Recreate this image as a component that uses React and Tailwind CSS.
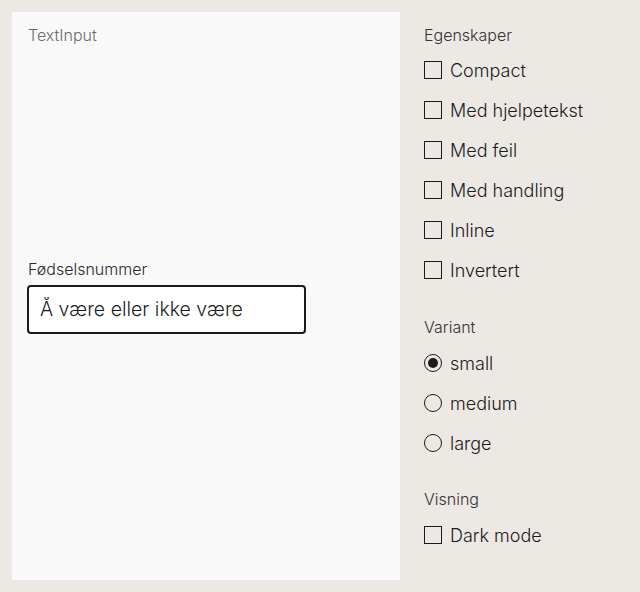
import React, { useState, useEffect, useRef } from "react";

const Checkbox = ({ label, checked, onChange }) => (
  <label className="flex h-10 cursor-pointer items-center gap-2">
    <input type="checkbox" className="sr-only" checked={checked} onChange={onChange} />
    <span className="flex h-[18px] w-[18px] shrink-0 items-center justify-center border-[1.5px] border-[#1b1b1b] bg-transparent">
      {checked && <span className="h-2 w-2 bg-[#1b1b1b]" />}
    </span>
    <span className="text-[18px] font-light text-[#1b1b1b]">{label}</span>
  </label>
);

const Radio = ({ label, checked, onChange }) => (
  <label className="flex h-10 cursor-pointer items-center gap-2">
    <input type="radio" className="sr-only" checked={checked} onChange={onChange} />
    <span className="flex h-[18px] w-[18px] shrink-0 items-center justify-center rounded-full border-[1.5px] border-[#1b1b1b]">
      {checked && <span className="h-[10px] w-[10px] rounded-full bg-[#1b1b1b]" />}
    </span>
    <span className="text-[18px] font-light text-[#1b1b1b]">{label}</span>
  </label>
);

const Heading = ({ children, className = "" }) => (
  <h3 className={`text-[16px] font-light leading-6 text-[#333] ${className}`}>{children}</h3>
);

export default function App() {
  const [props, setProps] = useState({});
  const [variant, setVariant] = useState("small");
  const [dark, setDark] = useState(false);
  const [value, setValue] = useState("Å være eller ikke være");
  const inputRef = useRef(null);

  useEffect(() => {
    const el = inputRef.current;
    if (el) {
      el.focus();
      el.setSelectionRange(el.value.length, el.value.length);
    }
  }, []);

  const toggle = (key) => setProps((p) => ({ ...p, [key]: !p[key] }));

  return (
    <div
      className="flex h-screen gap-6 bg-[#ece9e4] p-3"
      style={{ fontFamily: "Inter, 'Noto Sans', sans-serif" }}
    >
      {/* Preview */}
      <div className="flex w-[388px] flex-col bg-[#f9f9f9] px-4 pt-[11px] pb-[37px]">
        <p className="text-[16px] font-light leading-6 text-[#6b6b6b]">TextInput</p>
        <div className="flex flex-1 items-center">
          <div className="flex flex-col gap-1">
            <label className="text-[16px] font-light leading-6 text-[#2a2a2a]">Fødselsnummer</label>
            <input
              ref={inputRef}
              value={value}
              onChange={(e) => setValue(e.target.value)}
              className="-ml-px h-[49px] w-[279px] rounded-[4px] border-2 border-[#1b1b1b] bg-white px-[11px] text-[19.5px] font-light text-[#1b1b1b] caret-[#1b1b1b] outline-none"
            />
          </div>
        </div>
      </div>

      {/* Controls */}
      <div className="flex flex-col pt-[11px]">
        <Heading>Egenskaper</Heading>
        <div className="mt-[3px] flex flex-col">
          {["Compact", "Med hjelpetekst", "Med feil", "Med handling", "Inline", "Invertert"].map((item) => (
            <Checkbox key={item} label={item} checked={!!props[item]} onChange={() => toggle(item)} />
          ))}
        </div>

        <Heading className="mt-[25px]">Variant</Heading>
        <div className="mt-1 flex flex-col">
          {["small", "medium", "large"].map((v) => (
            <Radio key={v} label={v} checked={variant === v} onChange={() => setVariant(v)} />
          ))}
        </div>

        <Heading className="mt-6">Visning</Heading>
        <div className="mt-1 flex flex-col">
          <Checkbox label="Dark mode" checked={dark} onChange={() => setDark(!dark)} />
        </div>
      </div>
    </div>
  );
}
